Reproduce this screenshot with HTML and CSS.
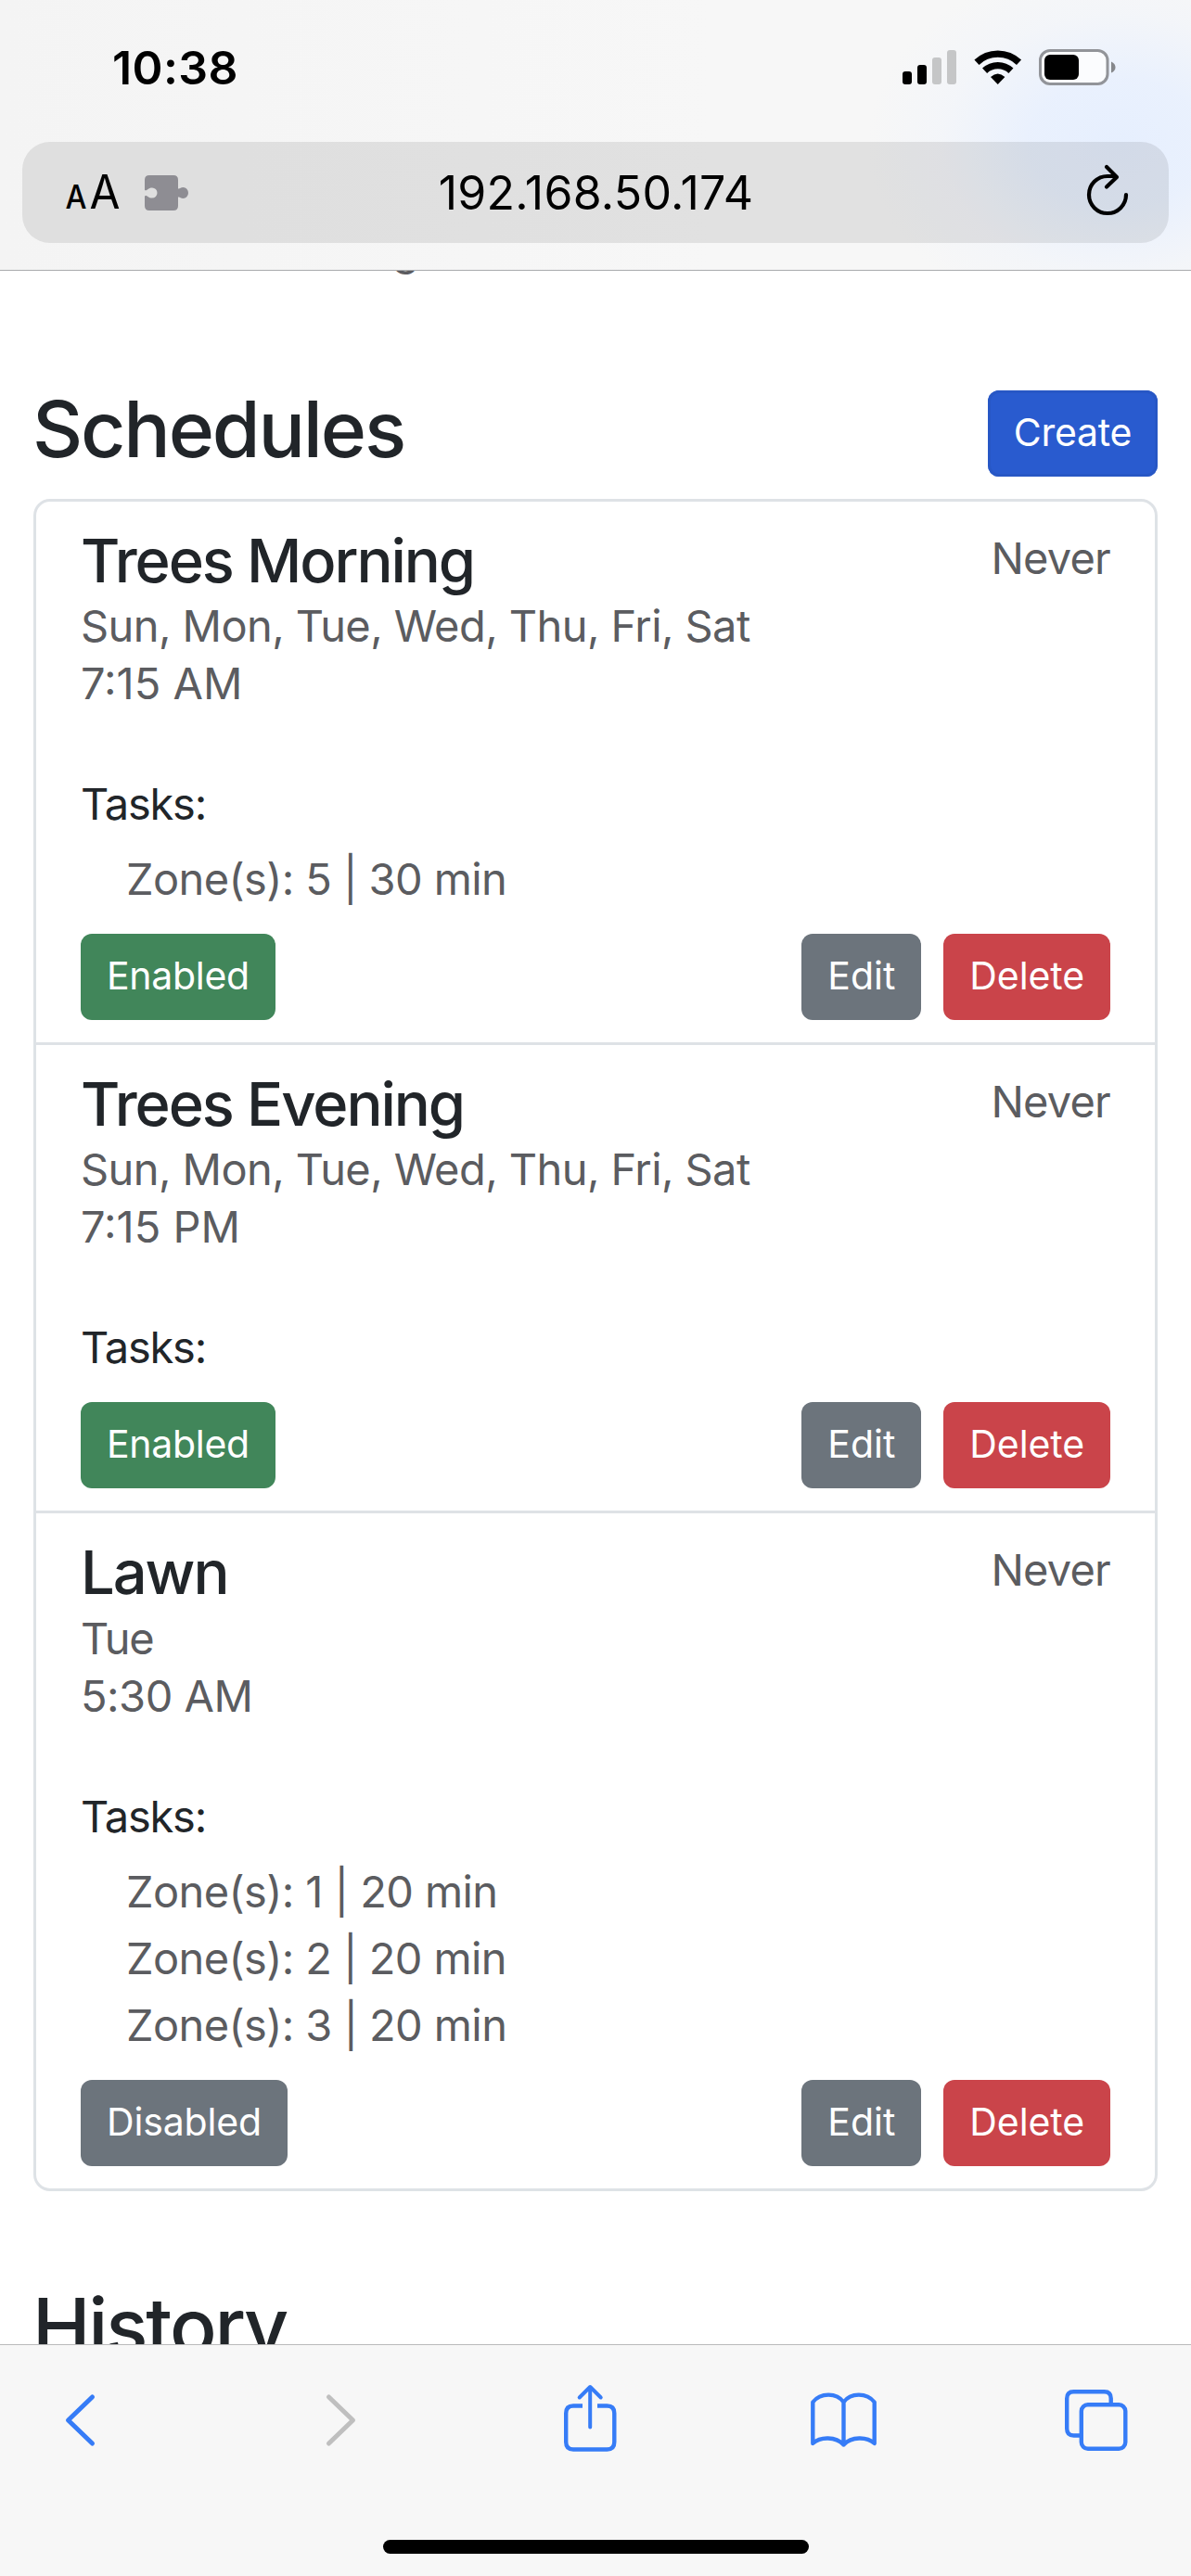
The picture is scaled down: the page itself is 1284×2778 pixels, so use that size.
FILE: index.html
```html
<!DOCTYPE html>
<html lang="en">
<head>
<meta charset="utf-8">
<title>Schedules</title>
<link rel="stylesheet" href="styles.css">
</head>
<body>
<header class="chrome-top">
  <div class="status">
    <span class="clock">10:38</span>
    <svg class="status-icons" width="230" height="40" viewBox="973 53 230 40">
      <g><rect x="973" y="77" width="10" height="14" rx="3"/><rect x="989" y="70" width="10" height="21" rx="3"/></g>
      <g fill="#c5c6c7"><rect x="1005" y="62" width="10" height="29" rx="3"/><rect x="1021" y="54" width="10" height="37" rx="3"/></g>
      <g fill="none" stroke="#000" stroke-width="7.4"><path d="M1053 67.2A33 33 0 0 1 1098.500 67.200"/><path d="M1061.600 76.300A20.500 20.500 0 0 1 1089.900 76.300"/></g>
      <path d="M1075.700 91L1068 83Q1075.700 76 1083.400 83Z"/>
      <rect x="1121.500" y="54.500" width="72.500" height="36" rx="10.500" fill="#fbfcfe" stroke="#929499" stroke-width="3"/>
      <rect x="1126" y="59" width="37" height="27" rx="6"/>
      <path d="M1198 66.500Q1202.500 68.500 1202.500 72.500Q1202.500 76.500 1198 78.500Z" fill="#85878b"/>
    </svg>
  </div>
  <div class="address">
    <div class="address-tools">
      <svg class="text-size" width="58" height="44" viewBox="71 187 58 44">
        <text class="letter-small" x="70.500" y="226" textLength="23" lengthAdjust="spacingAndGlyphs">A</text>
        <text class="letter-big" x="96.500" y="226" textLength="33" lengthAdjust="spacingAndGlyphs">A</text>
      </svg>
      <svg width="47" height="38" viewBox="0 0 47 38"><path fill="#8e8d93" d="M5 0H31Q36 0 36 5V14.500C38 15 38.500 13 41.500 13A5.500 6 0 0 1 41.500 25C38.500 25 38 23 36 23.500V33Q36 38 31 38H5Q0 38 0 33V22.500C2.500 20.500 3 24.500 8 24.500A5.500 5.500 0 0 0 8 13.500C3 13.500 2.500 17.500 0 16V5Q0 0 5 0Z"/></svg>
    </div>
    <span class="url">192.168.50.174</span>
    <svg class="reload" width="46" height="56" viewBox="1171 177 46 56" fill="none" stroke="#000" stroke-width="4.200" stroke-linecap="round" stroke-linejoin="round"><path d="M1214 210A20 20 0 1 1 1194 190H1203M1193 180L1204 191L1193 201.500"/></svg>
  </div>
</header>
<main class="page">
  <div class="previous"><p>g</p></div>
  <div class="section-head"><h2 class="h2">Schedules</h2><button class="btn primary">Create</button></div>
  <section class="list">
    <article class="item">
      <div class="item-head"><h4 class="h4">Trees Morning</h4><span class="last">Never</span></div>
      <p class="muted days">Sun, Mon, Tue, Wed, Thu, Fri, Sat</p>
      <p class="muted time">7:15 AM</p>
      <p class="tasks">Tasks:</p>
      <ul class="zones"><li>Zone(s): 5 | 30 min</li></ul>
      <div class="actions"><button class="btn success">Enabled</button><button class="btn secondary push">Edit</button><button class="btn danger">Delete</button></div>
    </article>
    <article class="item">
      <div class="item-head"><h4 class="h4">Trees Evening</h4><span class="last">Never</span></div>
      <p class="muted days">Sun, Mon, Tue, Wed, Thu, Fri, Sat</p>
      <p class="muted time">7:15 PM</p>
      <p class="tasks">Tasks:</p>
      <div class="actions"><button class="btn success">Enabled</button><button class="btn secondary push">Edit</button><button class="btn danger">Delete</button></div>
    </article>
    <article class="item">
      <div class="item-head"><h4 class="h4">Lawn</h4><span class="last">Never</span></div>
      <p class="muted day">Tue</p>
      <p class="muted">5:30 AM</p>
      <p class="tasks">Tasks:</p>
      <ul class="zones"><li>Zone(s): 1 | 20 min</li><li>Zone(s): 2 | 20 min</li><li>Zone(s): 3 | 20 min</li></ul>
      <div class="actions"><button class="btn secondary state">Disabled</button><button class="btn secondary push">Edit</button><button class="btn danger">Delete</button></div>
    </article>
  </section>
  <h2 class="h2 history">History</h2>
</main>
<footer class="chrome-bottom">
  <nav class="toolbar">
    <svg class="back" width="33" height="56" viewBox="70 2582 33 56"><path d="M99.500 2585L73.500 2610L99.500 2635"/></svg>
    <svg class="forward" width="33" height="56" viewBox="351 2582 33 56"><path d="M354.500 2585L380.500 2610L354.500 2635"/></svg>
    <svg class="share" width="58" height="74" viewBox="607 2571 58 74"><path stroke-linecap="butt" d="M628 2594.500H618Q610.200 2594.500 610.200 2602.500V2633.500Q610.200 2641.500 618 2641.500H654.500Q662.300 2641.500 662.300 2633.500V2602.500Q662.300 2594.500 654.500 2594.500H644"/><path stroke-width="4" d="M636.200 2617.500V2574.500M624.700 2585.500L636.200 2574L647.700 2585.500"/></svg>
    <svg class="book" width="73" height="62" viewBox="873 2579 73 62"><path d="M909.500 2590.500C902 2580 884.500 2580 876.300 2590.500V2635C884.500 2627.500 901 2627.500 909.500 2636.500C918 2627.500 934.500 2627.500 942.700 2635V2590.500C934.500 2580 917 2580 909.500 2590.500V2636.500"/></svg>
    <svg class="tabs" width="70" height="68" viewBox="1147 2576 70 68"><path stroke-linecap="butt" d="M1165 2626.500H1157.500Q1150.200 2626.500 1150.200 2619V2586.500Q1150.200 2579.200 1157.500 2579.200H1190.500Q1197.700 2579.200 1197.700 2586.500V2592"/><rect x="1165.800" y="2593.300" width="47.500" height="47.500" rx="7"/></svg>
  </nav>
  <div class="home"></div>
</footer>
</body>
</html>
```
FILE: styles.css
```css
* { box-sizing: border-box; margin: 0; padding: 0; }

body {
  width: 1284px;
  height: 2778px;
  display: flex;
  flex-direction: column;
  overflow: hidden;
  background: #fff;
  color: #212529;
  font-family: Inter, "Liberation Sans", sans-serif;
}

svg { display: block; flex: none; overflow: visible; }

/* Browser chrome */
.chrome-top {
  height: 292px;
  flex: none;
  color: #000;
  border-bottom: 1px solid #a9abad;
  background:
    radial-gradient(ellipse 270px 200px at 1205px 155px, #e6effe 0%, rgba(232, 240, 254, .9) 35%, rgba(238, 243, 252, .4) 70%, rgba(246, 246, 246, 0) 100%),
    linear-gradient(90deg, #f4f4f4, #f7f7f7 60%);
}
.status { display: flex; justify-content: space-between; height: 153px; padding: 36px 81px 0 121px; }
.status-icons { margin-top: 17px; }
.clock { font-size: 50px; font-weight: 600; line-height: 74px; letter-spacing: .4px; }

.address {
  display: grid;
  grid-template-columns: 1fr auto 1fr;
  align-items: center;
  height: 109px;
  margin: 0 24px;
  padding: 0 43px 0 47px;
  border-radius: 30px;
  background: rgba(0, 0, 0, .085);
}
.address-tools { display: flex; align-items: center; gap: 27px; }
.letter-small { font-size: 36px; font-weight: 500; }
.letter-big { font-size: 51px; }
.url { font-size: 50px; letter-spacing: .3px; margin-left: -3px; }
.reload { justify-self: end; margin-bottom: 5px; }

/* Page */
.page { flex: 1; min-height: 0; overflow: hidden; padding: 0 36px; }
.previous { height: 14px; overflow: hidden; padding-left: 387px; font-size: 47px; line-height: 72px; color: #5b5c60; }
.previous p { margin-top: -59px; }
.section-head { display: flex; justify-content: space-between; align-items: flex-start; margin-top: 115px; }
.h2 { margin-left: -1px; font-size: 84px; font-weight: 500; line-height: 84px; letter-spacing: -2.2px; }
.history { margin-top: 104px; }

.btn {
  height: 93px;
  padding: 0 28px 3px;
  border: 0;
  border-radius: 12px;
  color: #fff;
  font: 400 41px/90px Inter, "Liberation Sans", sans-serif;
}
.primary { background: #295bcf; box-shadow: inset 0 0 0 3px #2757c5; letter-spacing: -.3px; }
.success { background: #41865a; letter-spacing: -.3px; }
.secondary { background: #6c747c; }
.state { letter-spacing: -.15px; }
.danger { background: #ca444a; margin-left: 24px; letter-spacing: -.1px; }
.push { margin-left: auto; }

.list { margin-top: 24px; border: 3px solid #dee2e6; border-radius: 18px; }
.item { padding: 24px 48px; }
.item + .item { border-top: 3px solid #dee2e6; }
.item-head { display: flex; justify-content: space-between; }
.h4 { font-size: 65px; font-weight: 500; line-height: 79.2px; letter-spacing: -2.05px; }
.last, .muted, .zones, .tasks { font-size: 47px; line-height: 62px; color: #5b5c60; letter-spacing: -.5px; }
.last { line-height: 74px; letter-spacing: -.8px; }
.days { letter-spacing: -.58px; }
.day { letter-spacing: -1.2px; }
.time { letter-spacing: 0; }
.tasks { margin-top: 63px; line-height: 72px; color: #212529; letter-spacing: -1.2px; }
.zones { list-style: none; margin-top: 9px; padding-left: 49px; line-height: 72px; letter-spacing: -.6px; }
.actions { display: flex; margin-top: 23px; }

/* Bottom bar */
.chrome-bottom { height: 250px; flex: none; border-top: 1px solid #bababb; background: #f7f7f7; }
.toolbar {
  display: flex;
  align-items: center;
  height: 162px;
  padding-left: 70px;
  fill: none;
  stroke: #367cf7;
  stroke-width: 4.4;
  stroke-linecap: round;
  stroke-linejoin: round;
}
.back, .forward { stroke-width: 5; }
.forward { margin-left: 248px; stroke: #bfbfbf; }
.share { margin-left: 223px; margin-bottom: 4px; }
.book { margin-left: 208px; }
.tabs { margin-left: 201px; }
.home { width: 459px; height: 15px; margin: 48px auto 0; border-radius: 8px; background: #000; }
```
